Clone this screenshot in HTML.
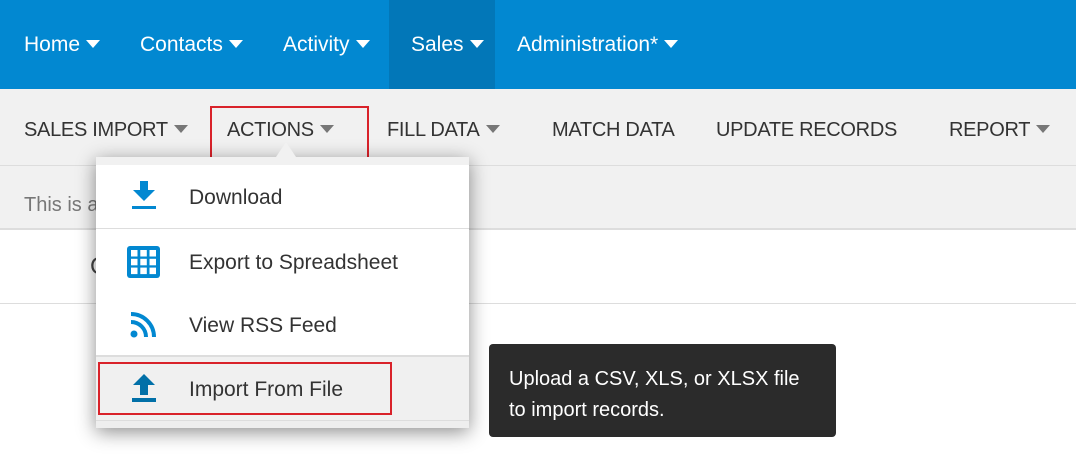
<!DOCTYPE html>
<html><head><style>
*{margin:0;padding:0;box-sizing:border-box}
body{width:1076px;height:454px;overflow:hidden;background:#fff;font-family:"Liberation Sans",sans-serif;position:relative}
.a{position:absolute;white-space:nowrap}
.nav{color:#fff;font-size:21px;top:33px}
.sub{color:#333;font-size:20px;top:119px;letter-spacing:-0.3px}
.car{display:inline-block;width:0;height:0;border-left:7px solid transparent;border-right:7px solid transparent;border-top:8px solid #fff;vertical-align:middle;margin-left:6px;margin-top:-3px}
.sub .car{border-top-color:#777}
.item{font-size:21px;color:#333;left:189px}
</style></head><body>
<div class="a" style="left:0;top:0;width:1076px;height:89px;background:#0288d1"></div>
<div class="a" style="left:389px;top:0;width:106px;height:89px;background:#0277b8"></div>
<div class="a nav" style="left:24px">Home<span class="car"></span></div>
<div class="a nav" style="left:140px">Contacts<span class="car"></span></div>
<div class="a nav" style="left:283px">Activity<span class="car"></span></div>
<div class="a nav" style="left:411px">Sales<span class="car"></span></div>
<div class="a nav" style="left:517px">Administration*<span class="car"></span></div>

<div class="a" style="left:0;top:89px;width:1076px;height:141px;background:#f1f1f1;border-bottom:2px solid #ddd"></div>
<div class="a" style="left:0;top:165px;width:1076px;height:1px;background:#ddd"></div>
<div class="a" style="left:0;top:303px;width:1076px;height:1px;background:#ddd"></div>
<div class="a sub" style="left:24px">SALES IMPORT<span class="car"></span></div>
<div class="a sub" style="left:227px">ACTIONS<span class="car"></span></div>
<div class="a sub" style="left:387px">FILL DATA<span class="car"></span></div>
<div class="a sub" style="left:552px">MATCH DATA</div>
<div class="a sub" style="left:716px">UPDATE RECORDS</div>
<div class="a sub" style="left:949px">REPORT<span class="car"></span></div>
<div class="a" style="left:24px;top:194px;font-size:20px;color:#777">This is a</div>
<div class="a" style="left:90px;top:253px;font-size:24px;color:#444">C</div>

<div class="a" style="left:210px;top:106px;width:159px;height:59px;border:2px solid #d9222a"></div>

<div class="a" style="left:96px;top:157px;width:373px;height:271px;background:#fff;box-shadow:0 4px 18px rgba(0,0,0,.45);border-top:8px solid #f1f1f1"></div>
<div class="a" style="left:276px;top:142px;width:0;height:0;border-left:10px solid transparent;border-right:10px solid transparent;border-bottom:15px solid #f1f1f1"></div>
<div class="a" style="left:96px;top:228px;width:373px;height:1px;background:#ddd"></div>
<div class="a" style="left:96px;top:355px;width:373px;height:65px;background:#f0f0f0;border-top:2px solid #ddd"></div>
<div class="a" style="left:96px;top:420px;width:373px;height:8px;background:#eee;border-top:1px solid #ddd"></div>
<div class="a" style="left:98px;top:362px;width:294px;height:53px;border:2px solid #d9222a"></div>

<svg class="a" style="left:130px;top:180px" width="28" height="30" viewBox="0 0 28 30"><path d="M10 1h8v9h7l-11 11L3 10h7z" fill="#0288d1"/><rect x="2" y="26" width="24" height="3" fill="#0288d1"/></svg>
<svg class="a" style="left:127px;top:246px" width="33" height="32" viewBox="0 0 33 32"><rect x="0" y="0" width="33" height="32" rx="3" fill="#0288d1"/><g fill="#fff"><rect x="4" y="4" width="6.5" height="6.5"/><rect x="13.3" y="4" width="6.5" height="6.5"/><rect x="22.5" y="4" width="6.5" height="6.5"/><rect x="4" y="12.8" width="6.5" height="6.5"/><rect x="13.3" y="12.8" width="6.5" height="6.5"/><rect x="22.5" y="12.8" width="6.5" height="6.5"/><rect x="4" y="21.6" width="6.5" height="6.5"/><rect x="13.3" y="21.6" width="6.5" height="6.5"/><rect x="22.5" y="21.6" width="6.5" height="6.5"/></g></svg>
<svg class="a" style="left:129px;top:311px" width="28" height="28" viewBox="0 0 28 28"><circle cx="5" cy="23" r="3.5" fill="#0288d1"/><path d="M2 11a15 15 0 0 1 15 15" stroke="#0288d1" stroke-width="4" fill="none"/><path d="M2 3a23 23 0 0 1 23 23" stroke="#0288d1" stroke-width="4" fill="none"/></svg>
<svg class="a" style="left:130px;top:373px" width="28" height="30" viewBox="0 0 28 30"><path d="M14 1l11 11h-7v10h-8V12H3z" fill="#0170a8"/><rect x="2" y="25" width="24" height="4" fill="#0170a8"/></svg>

<div class="a item" style="top:186px">Download</div>
<div class="a item" style="top:251px">Export to Spreadsheet</div>
<div class="a item" style="top:314px">View RSS Feed</div>
<div class="a item" style="top:378px">Import From File</div>

<div class="a" style="left:489px;top:344px;width:347px;height:93px;background:#2b2b2b;border-radius:4px"></div>
<div class="a" style="left:509px;top:364px;color:#fff;font-size:20px;line-height:31px">Upload a CSV, XLS, or XLSX file<br>to import records.</div>
</body></html>
